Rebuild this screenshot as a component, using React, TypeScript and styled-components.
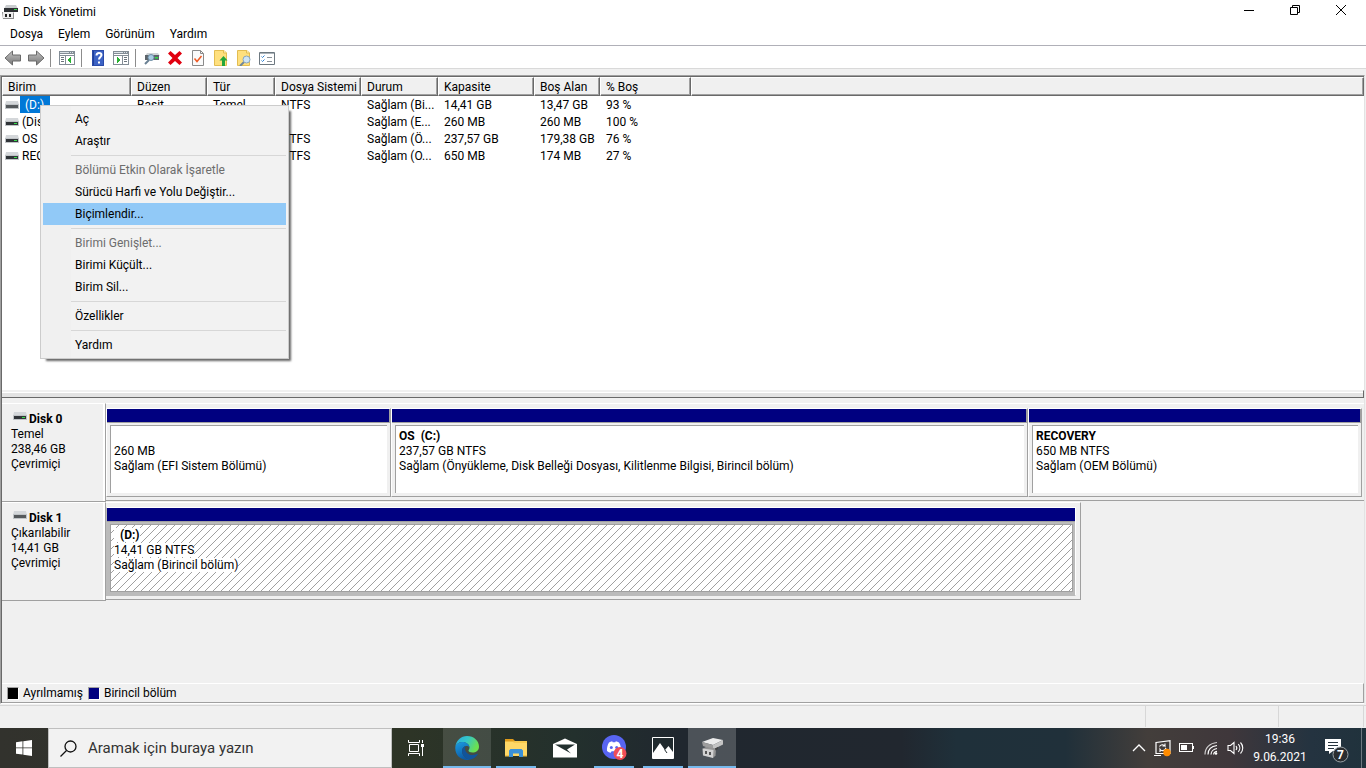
import React from "react";
import styled, { createGlobalStyle, css } from "styled-components";

const face = "#f0f0f0";
const shade = "#a0a0a0";
const dark = "#696969";
const navy = "#000080";

const GlobalStyle = createGlobalStyle`
  * { box-sizing: border-box; }
  body { margin: 0; background: #fff; }
  button, input, table { font: inherit; color: inherit; }
  button { border: 0; padding: 0; background: transparent; }
  svg { display: block; flex: none; }
`;

const Desktop = styled.div`
  display: flex;
  flex-direction: column;
  min-height: 100vh;
  overflow: hidden;
  color: #000;
  background: ${face};
  font: 12px/15px "Segoe UI", Roboto, "Open Sans", sans-serif;
`;

/* Title bar, menu bar, toolbar */

const TitleBar = styled.header`
  display: flex;
  align-items: center;
  height: 24px;
  padding: 0 2px;
  background: #fff;
`;

const Title = styled.h1`
  flex: 1;
  margin: 0 0 0 5px;
  font-size: 12px;
  font-weight: 400;
`;

const CaptionButton = styled.button`
  display: grid;
  place-items: center;
  width: 46px;
  height: 24px;
  padding-bottom: 4px;
`;

const MenuBar = styled.nav`
  display: flex;
  gap: 15px;
  height: 22px;
  padding: 0 10px;
  border-bottom: 1px solid #b0b0b8;
  background: #fff;
`;

const MenuButton = styled.button`
  height: 20px;
`;

const ToolBar = styled.div`
  display: flex;
  align-items: center;
  height: 23px;
  padding: 2px 0 0 1px;
  border-bottom: 1px solid #d9d9d9;
  margin-bottom: 6px;
  background: #fff;
`;

const ToolButton = styled.button`
  display: grid;
  place-items: center;
  width: 23px;
  height: 20px;
`;

const ToolDivider = styled.span`
  width: 1px;
  height: 18px;
  margin: 0 4px 0 3px;
  background: #8c8c8c;
`;

/* Volume list */

const Frame = styled.main`
  flex: 1;
  display: flex;
  flex-direction: column;
  margin-right: 1px;
  border: solid ${shade};
  border-width: 1px 0 0 1px;
  border-right: 1px solid #e3e3e3;
  border-bottom: 1px solid #fff;
`;

const FrameInner = styled.div`
  flex: 1;
  display: flex;
  flex-direction: column;
  border: solid ${dark};
  border-width: 1px 0 0 1px;
`;

const VolumePane = styled.section`
  position: relative;
  flex: 1 0 313px;
  background: #fff;
`;

const VolumeTable = styled.table`
  width: 100%;
  table-layout: fixed;
  border-collapse: separate;
  border-spacing: 0;
`;

const HeadCell = styled.th`
  height: 19px;
  padding: 2px 0 0 5px;
  border: 1px solid;
  border-color: #fff ${dark} ${dark} #fff;
  box-shadow: inset -1px -1px 0 ${shade};
  background: ${face};
  font-weight: 400;
  text-align: left;
  white-space: nowrap;
`;

const Cell = styled.td`
  height: 17px;
  padding: 2px 4px 0 6px;
  overflow: hidden;
  white-space: nowrap;
`;

const NameCell = styled(Cell)`
  padding: 0 0 0 3px;
`;

const VolumeName = styled.div`
  display: flex;
  align-items: center;
  height: 17px;
`;

const NameText = styled.span<{ $selected?: boolean }>`
  height: 17px;
  margin-left: 1px;
  padding: 2px 2px 0;
  white-space: pre;
  ${(p) =>
    p.$selected &&
    css`
      padding: 2px 6px 0 5px;
      color: #fff;
      background: #0078d7;
    `}
`;

const Splitter = styled.div`
  height: 8px;
  border-top: 1px solid ${face};
  border-bottom: 1px solid ${dark};
  border-right: 1px solid ${dark};
  background: linear-gradient(${face} 1px, #fff 1px 2px, #e3e3e3 2px);
`;

/* Context menu */

const ContextMenu = styled.div`
  position: absolute;
  top: 28px;
  left: 38px;
  width: 249px;
  padding: 2px;
  border: 1px solid #ccc;
  background: linear-gradient(90deg, ${face} 30px, #f2f2f2 30px);
  box-shadow: 4px 4px 2px -2px rgba(0, 0, 0, 0.6);
`;

const MenuItem = styled.button<{ $active?: boolean }>`
  display: block;
  width: 100%;
  height: 22px;
  padding-left: 32px;
  text-align: left;
  background: ${(p) => (p.$active ? "#91c9f7" : "transparent")};
  &:disabled { color: #6d6d6d; }
`;

const MenuLine = styled.hr`
  height: 1px;
  margin: 3px 0 3px 28px;
  border: 0;
  background: #d7d7d7;
`;

/* Disk graph */

const DiskPane = styled.section`
  flex: 1 0 285px;
  padding-top: 5px;
`;

const DiskRow = styled.div`
  display: flex;
  align-items: flex-start;
`;

const DiskLabel = styled.div`
  flex: none;
  width: 104px;
  height: 99px;
  padding: 8px 0 0 9px;
  border: solid;
  border-width: 1px 1px 1px 0;
  border-color: #fff ${shade} ${shade};
  box-shadow: inset -2px 0 0 #fff;
`;

const DiskName = styled.div`
  display: flex;
  padding-left: 2px;
  gap: 2px;
  font-weight: 700;
`;

const Strip = styled.div<{ $share: number; $closed?: boolean }>`
  flex: ${(p) => p.$share} 1 0;
  display: flex;
  min-width: 0;
  height: 98px;
  padding: 4px ${(p) => (p.$closed ? 4 : 2)}px 3px 0;
  border-top: 1px solid #fff;
  border-bottom: 1px solid ${shade};
  border-right: ${(p) => (p.$closed ? `1px solid ${shade}` : "0")};
`;

const Rest = styled.div<{ $share: number }>`
  flex: ${(p) => p.$share} 1 0;
`;

const Partition = styled.article<{ $share: number; $selected?: boolean }>`
  flex: ${(p) => p.$share} 1 0;
  display: flex;
  flex-direction: column;
  min-width: 0;
  border: 1px solid;
  border-color: ${(p) =>
    p.$selected ? "#fff #fff #bbb #bbb" : `#fff ${shade} ${shade} #fff`};
  background: ${(p) => (p.$selected ? "#bbb" : face)};
  &::before {
    content: "";
    height: 13px;
    border-right: ${(p) => (p.$selected ? 0 : 1)}px solid ${shade};
    border-bottom: 1px solid ${shade};
    background: ${navy};
  }
`;

const PartitionBody = styled.div<{ $selected?: boolean }>`
  flex: 1;
  margin: 2px 3px 3px;
  padding: 3px 3px 0;
  overflow: hidden;
  white-space: pre;
  border: solid ${shade};
  border-width: ${(p) => (p.$selected ? "1px" : "1px 0 0 1px")};
  background: #fff;
  ${(p) =>
    p.$selected &&
    css`
      margin-right: 2px;
      background: linear-gradient(to bottom right, #fff 44%, #a0a0a0 46%, #a0a0a0 54%, #fff 56%)
        0 0 / 8px 8px;
      span, b { background: #fff; }
    `}
`;

const Line = styled.div`
  height: 15px;
`;

const Legend = styled.footer`
  display: flex;
  align-items: center;
  height: 20px;
  padding-left: 5px;
  border: solid;
  border-width: 1px 1px 1px 0;
  border-color: #fff ${shade} ${shade};
`;

const Swatch = styled.i<{ $color: string }>`
  width: 12px;
  height: 13px;
  margin-right: 4px;
  border: 1px solid;
  border-color: ${shade} #fff #fff ${shade};
  background: ${(p) => p.$color};
`;

const LegendText = styled.span`
  margin-right: 5px;
`;

const StatusBar = styled.div`
  display: flex;
  justify-content: flex-end;
  height: 24px;
  padding: 1px 2px 1px 0;
  border-top: 1px solid ${face};
  box-shadow: inset 0 1px 0 #d7d7d7;
`;

const StatusCell = styled.span<{ $width: number }>`
  width: ${(p) => p.$width}px;
  border-left: 1px solid #d7d7d7;
`;

/* Taskbar */

const TaskBar = styled.footer`
  display: flex;
  height: 40px;
  color: #fff;
  background: linear-gradient(
    90deg,
    #32322d 0,
    #2d3426 30%,
    #23302d 42%,
    #20272f 50%,
    #21272f 66%,
    #1f303a 70%,
    #20303a 78%,
    #433e3b 84%,
    #3f373b 90%,
    #243340 96%,
    #20323c 100%
  );
`;

const StartButton = styled.button`
  display: grid;
  place-items: center;
  width: 48px;
`;

const SearchBox = styled.label`
  display: flex;
  align-items: center;
  width: 344px;
  padding-left: 11px;
  gap: 11px;
  border: 1px solid #bfbfbf;
  color: #1e1e1e;
  background: #f2f2f2;
`;

const SearchInput = styled.input`
  flex: 1;
  min-width: 0;
  padding: 0;
  border: 0;
  outline: 0;
  font-size: 15px;
  line-height: 20px;
  background: transparent;
  &::placeholder { color: #333; opacity: 1; }
`;

const TaskList = styled.div`
  display: flex;
  gap: 1px;
`;

const TaskButton = styled.button<{ $state?: "open" | "focused" }>`
  position: relative;
  display: grid;
  place-items: center;
  width: 48px;
  background: ${(p) => (p.$state === "focused" ? "rgba(255,255,255,.2)" : "transparent")};
  &::after {
    content: "";
    position: absolute;
    bottom: 0;
    left: ${(p) => (p.$state === "focused" ? 0 : 4)}px;
    right: ${(p) => (p.$state === "focused" ? 0 : 4)}px;
    height: ${(p) => (p.$state ? 2 : 0)}px;
    background: #76b9ed;
  }
`;

const EdgeButton = styled(TaskButton)`
  margin-left: 2px;
  background: rgba(255, 255, 255, 0.13);
`;

const Tray = styled.div`
  display: flex;
  margin-left: auto;
`;

const TrayButton = styled.button`
  display: grid;
  place-items: center;
  width: 24px;
`;

const Clock = styled.time`
  width: 66px;
  padding-top: 2px;
  line-height: 18px;
  text-align: center;
`;

const NoticeButton = styled.button`
  display: grid;
  place-items: center;
  width: 48px;
  padding-top: 4px;
`;

const PeekButton = styled.button`
  width: 5px;
  border-left: 1px solid #6d7880;
`;

/* Icons */

const DriveIcon = ({ led }: { led?: boolean }) => (
  <svg width="14" height="8" viewBox="0 0 14 8" aria-hidden="true">
    <path d="M1 0h12l1 4H0z" fill="#d4d7da" />
    <path d="M0 3h14v5H0z" fill="#c0c4c7" />
    <path d="M1 4h12v3H1z" fill={led ? "#303438" : "#55595c"} />
    {led && <path d="M9 5h3v1H9z" fill="#36e04a" />}
  </svg>
);

const AppIcon = () => (
  <svg width="16" height="16" viewBox="0 0 16 16" aria-hidden="true">
    <path d="M4 1h10l2 4H2z" fill="#c9ccce" />
    <path d="M2 4h14v4H2z" fill="#2d3033" />
    <path d="M12 5h3v1h-3z" fill="#35d648" />
    <path d="M0 8h11l1 1v6H1z" fill="#8c8c8c" />
    <path d="M1 8h10v6H1z" fill="#ededed" />
    <path d="M3 10h2v3H3zM7 10h2v3H7z" fill="#222" />
  </svg>
);

const ArrowIcon = ({ flip }: { flip?: boolean }) => (
  <svg width="18" height="16" viewBox="0 0 18 16" aria-hidden="true">
    <defs>
      <linearGradient id={flip ? "arrowB" : "arrowA"} x1="0" y1="0" x2="0" y2="1">
        <stop offset="0" stopColor="#c4c4c4" />
        <stop offset="1" stopColor="#777" />
      </linearGradient>
    </defs>
    <path
      d={flip ? "M17 8 9.500 1v4H1.500v6h8v4z" : "M1 8 8.500 1v4h8v6h-8v4z"}
      fill={`url(#${flip ? "arrowB" : "arrowA"})`}
      stroke="#6a6a6a"
    />
  </svg>
);

const ConsoleIcon = ({ right }: { right?: boolean }) => (
  <svg width="16" height="14" viewBox="0 0 16 14" shapeRendering="crispEdges" aria-hidden="true">
    <path d="M0 0h16v14H0z" fill="#838d96" />
    <path d="M1 3h14v1H1zM1 5h14v8H1z" fill="#fff" />
    <path d="M1 1h9v1H1zM11 1h1v1h-1zM13 1h1v1h-1z" fill="#dce2e7" />
    <path d={right ? "M9 5h1v8H9z" : "M6 5h1v8H6z"} fill="#838d96" />
    <path
      d={right ? "M11 6h3v1h-3zM11 8h3v1h-3zM11 10h3v1h-3z" : "M2 6h3v1H2zM2 8h3v1H2zM2 10h3v1H2z"}
      fill="#6b747c"
    />
    <path
      d={right ? "M4 6h1v1h1v1h1v2H6v1H5v1H4z" : "M12 6h-1v1h-1v1H9v2h1v1h1v1h1z"}
      fill="#29b233"
    />
  </svg>
);

const HelpIcon = () => (
  <svg width="14" height="16" viewBox="0 0 14 16" aria-hidden="true">
    <path d="M1 0h12v16H1z" fill="#3c62c4" />
    <path d="M1 0h2v16H1z" fill="#20409a" />
    <path d="M1.500.500h11v15h-11z" fill="none" stroke="#2a4aa8" />
    <path
      d="M5.500 5.500c0-3.500 5-3 5-.500 0 2-2.500 2-2.500 4.500"
      fill="none"
      stroke="#fff"
      strokeWidth="2"
    />
    <path d="M7 11.500h2v2H7z" fill="#fff" />
  </svg>
);

const DriveSearchIcon = () => (
  <svg width="16" height="14" viewBox="0 0 16 14" aria-hidden="true">
    <path d="M3 2h11l2 3H1z" fill="#d0d4d7" />
    <path d="M1 4h14v5H1z" fill="#5d656b" />
    <path d="M11 6h3v1.500h-3z" fill="#31dd43" />
    <circle cx="7" cy="6.500" r="3" fill="#a8cbe4" stroke="#6f8ea5" />
    <path d="M5 9 1 13" stroke="#6a8193" strokeWidth="2" />
  </svg>
);

const DeleteIcon = () => (
  <svg width="16" height="16" viewBox="0 0 16 16" aria-hidden="true">
    <path
      d="M1 3.500 3.500 1 8 5l4.500-4L15 3.500 10.500 8l4.500 4.500-2.500 2.500L8 11l-4.500 4L1 12.500 5.500 8z"
      fill="#e1000f"
    />
  </svg>
);

const PageCheckIcon = () => (
  <svg width="14" height="16" viewBox="0 0 14 16" aria-hidden="true">
    <path d="M1.500.500h8l3 3v12h-11z" fill="#fafafa" stroke="#8a8a8a" />
    <path d="M9.500.500v3h3" fill="none" stroke="#8a8a8a" />
    <path d="m3.500 8.500 2.500 3 4.500-5.500" fill="none" stroke="#ee5a24" strokeWidth="1.500" />
  </svg>
);

const FolderPageIcon = ({ search }: { search?: boolean }) => (
  <svg width="16" height="16" viewBox="0 0 16 16" aria-hidden="true">
    <path d="M1.500.500H11l2.500 2.500v12.500h-12z" fill="#ffe07e" stroke="#e3bd51" />
    <path d="M10.500.500V3h3" fill="#fff1be" stroke="#e3bd51" />
    {search ? (
      <>
        <path d="m8 12-4 4" stroke="#70869a" strokeWidth="2" />
        <circle cx="10.500" cy="9.500" r="3.500" fill="#cfe5f5" stroke="#8aa5bb" />
      </>
    ) : (
      <path d="M10.500 6 14.500 10.500h-2.500V16H9v-5.500H6.500z" fill="#23a63a" />
    )}
  </svg>
);

const ChecklistIcon = () => (
  <svg width="16" height="13" viewBox="0 0 16 13" aria-hidden="true">
    <path d="M.500.500h15v12H.500z" fill="#fff" stroke="#6d7880" />
    <path d="M1 1h14v1H1z" fill="#aab2b8" />
    <path d="m2.500 4.500 1 1 2-2M2.500 8.500l1 1 2-2" fill="none" stroke="#2c7fd0" />
    <path d="M8 5.500h5M8 9.500h5" stroke="#8a9299" />
  </svg>
);

const WindowsIcon = () => (
  <svg width="16" height="16" viewBox="0 0 16 16" aria-hidden="true">
    <path
      d="M0 2.200 6.500 1.300v6.200H0zM7.300 1.200 16 0v7.500H7.300zM0 8.300h6.500v6.300L0 13.700zM7.300 8.300H16V16l-8.700-1.300z"
      fill="#fff"
    />
  </svg>
);

const SearchIcon = () => (
  <svg width="17" height="17" viewBox="0 0 17 17" aria-hidden="true">
    <circle cx="10.500" cy="6.500" r="5.500" fill="none" stroke="#111" strokeWidth="1.300" />
    <path d="M6.500 10.500.500 16.500" stroke="#111" strokeWidth="1.300" />
  </svg>
);

const TaskViewIcon = () => (
  <svg width="17" height="16" viewBox="0 0 17 16" aria-hidden="true">
    <path
      d="M.500 0v2.500h11V0M.500 16v-2.500h11V16M1.500 4.500h9v7h-9zM14.500 0v3M14.500 7v9"
      fill="none"
      stroke="#fff"
    />
    <path d="M13 4h3v3h-3z" fill="#fff" />
  </svg>
);

const EdgeIcon = () => (
  <svg width="24" height="24" viewBox="0 0 24 24" aria-hidden="true">
    <defs>
      <linearGradient id="edgeTop" x1="0" y1="0" x2="1" y2=".4">
        <stop offset="0" stopColor="#2aa8e0" />
        <stop offset=".5" stopColor="#34c6c8" />
        <stop offset="1" stopColor="#6be050" />
      </linearGradient>
      <linearGradient id="edgeSide" x1="0" y1="0" x2=".4" y2="1">
        <stop offset="0" stopColor="#1b9de2" />
        <stop offset="1" stopColor="#0c59a4" />
      </linearGradient>
    </defs>
    <path
      d="M.400 10.500C1.300 4.500 6 0 12 0c7 0 12 5 12 10.500 0 4-3 6-6.500 6-2.500 0-4-1-4-2 0-.700 1-1.200 1-3C14.500 8.500 11.500 6 7.500 6 4 6 1.500 8 .400 10.500z"
      fill="url(#edgeTop)"
    />
    <path
      d="M.400 10.500C1.500 7.500 4.500 6 7.500 6c4 0 7 2.500 7 5.500-.500-1-1.500-1.500-3-1.500-2.500 0-4.500 2-4.500 5 0 4 3.500 8.500 8.500 8.500-1 .400-2.200.500-3.500.500C5 24-.600 18 .400 10.500z"
      fill="url(#edgeSide)"
    />
    <path
      d="M7 15c0-2.500 1.500-4.500 4-5-1 1-1.300 2.200-1 3.500.700 3.500 4 5.500 7.500 5.500 2 0 3.500-.500 4.700-1.200.500-.200.900.200.500.700-1.700 2.600-4 4.400-7.200 5C10.500 23.500 7 19 7 15z"
      fill="#11549b"
    />
  </svg>
);

const ExplorerIcon = () => (
  <svg width="22" height="18" viewBox="0 0 22 18" aria-hidden="true">
    <path d="M0 0h8l2 2v3H0z" fill="#e09b1a" />
    <path d="M0 2.500h22V17H0z" fill="#ffd867" />
    <path d="M10 2h12v2H8z" fill="#f8ca4e" />
    <path d="M4 18v-6.500L5.500 10h11l1.500 1.500V18h-4v-3.500H8V18z" fill="#3b91d8" />
    <path d="M0 16h4v1.500H0zM18 16h4v1.500h-4z" fill="#f2c24a" />
  </svg>
);

const MailIcon = () => (
  <svg width="24" height="20" viewBox="0 0 24 20" aria-hidden="true">
    <path d="M0 6 12 .500 24 6v13.500H0z" fill="#fff" />
    <path d="M2 6.500h20L14 11.500l4 4-9-5z" fill="#23302f" />
  </svg>
);

const DiscordIcon = () => (
  <svg width="26" height="26" viewBox="0 0 26 26" aria-hidden="true">
    <circle cx="13" cy="12" r="12" fill="#5865f2" />
    <path
      d="M8 7.500c1-.700 2.300-1 3.200-1.200l.5 1h2.600l.5-1c1 .200 2.200.500 3.200 1.200 1.700 2.700 2.300 5.500 2 8.500-1.200 1-2.500 1.500-3.700 1.800l-.9-1.500H10.600l-.9 1.500C8.500 17.500 7.200 17 6 16c-.300-3 .400-5.800 2-8.500z"
      fill="#fff"
    />
    <circle cx="10.300" cy="12.500" r="1.500" fill="#5865f2" />
    <circle cx="15.700" cy="12.500" r="1.500" fill="#5865f2" />
    <circle cx="19" cy="18.500" r="6.500" fill="#f04e57" />
    <text x="19" y="22.500" textAnchor="middle" fontSize="12" fontWeight="700" fill="#fff">
      4
    </text>
  </svg>
);

const PhotosIcon = () => (
  <svg width="22" height="22" viewBox="0 0 22 22" aria-hidden="true">
    <path d="M.500.500h21v21H.500z" fill="#202a2e" stroke="#fff" />
    <path d="M1 16 8 6l5 7 3.500-4 4.500 6v6H1z" fill="#fff" />
    <path d="m12.500 12.500 2.500 3.500" stroke="#202a2e" />
  </svg>
);

const DiskToolIcon = () => (
  <svg width="22" height="22" viewBox="0 0 22 22" aria-hidden="true">
    <path d="M1 5 12 1l10 2-10 5z" fill="#ececec" />
    <path d="M1 5l11 3v4.500L2 9z" fill="#9d9d9d" />
    <path d="m12 8 10-5v4.500L12 12.500z" fill="#c4c4c4" />
    <path d="m2 11.500 3-1.500 8 1 2 1.500-.5 6L12 21z" fill="#949494" />
    <path d="m1.500 11.500 11 1.500-.5 8-10-2.500z" fill="#d2d2d2" />
    <path d="M4 14h2v3H4zM8 15h2v3H8z" fill="#555" />
    <path d="M14 11.500l3-1.500v2l-2.500 1.500z" fill="#444" />
  </svg>
);

const ChevronIcon = () => (
  <svg width="14" height="8" viewBox="0 0 14 8" aria-hidden="true">
    <path d="M1 7 7 1l6 6" fill="none" stroke="#fff" strokeWidth="1.300" />
  </svg>
);

const SyncIcon = () => (
  <svg width="18" height="17" viewBox="0 0 18 17" aria-hidden="true">
    <path d="M2 2.500 16 .700v12.600L2 13.500z" fill="none" stroke="#fff" strokeWidth="1.200" />
    <path d="M0 15.500h7M5.500 6.500c1-2 4-2.500 5.500-.500V3.500M12 8c-1 3-4.500 3.500-6 1.200V12M8.500 6H11" fill="none" stroke="#fff" strokeWidth="1.100" />
    <circle cx="13" cy="12.500" r="3.700" fill="#ff8c00" />
  </svg>
);

const BatteryIcon = () => (
  <svg width="16" height="10" viewBox="0 0 16 10" shapeRendering="crispEdges" aria-hidden="true">
    <path d="M.500.500h13v8H.500z" fill="none" stroke="#fff" />
    <path d="M2 2h6v5H2zM14 3h1v3h-1z" fill="#fff" />
  </svg>
);

const WifiIcon = () => (
  <svg width="14" height="14" viewBox="0 0 14 14" aria-hidden="true">
    <g fill="none" stroke="#fff" strokeWidth="1.200">
      <path d="M1 13.500C1 6.500 6 2 13 1.500" opacity=".75" />
      <path d="M4 13.500C4 8.500 7.500 5.200 13 4.500" />
      <path d="M7 13.500c0-3 2.500-5.500 6-6" />
      <path d="M9.700 13.500c0-1.600 1.300-3 3.300-3.200" />
    </g>
    <circle cx="12" cy="12.500" r="1.300" fill="#fff" />
  </svg>
);

const VolumeIcon = () => (
  <svg width="17" height="14" viewBox="0 0 17 14" aria-hidden="true">
    <g fill="none" stroke="#fff" strokeWidth="1.100">
      <path d="M1 4.500h2.500L7 1.500v11l-3.500-3H1z" />
      <path d="M9 5c1 1.200 1 2.800 0 4M11.300 3.200c2 2.200 2 5.400 0 7.600M13.500 1.500c3 3.200 3 7.800 0 11" />
    </g>
  </svg>
);

const NoticeIcon = () => (
  <svg width="26" height="25" viewBox="0 0 26 25" aria-hidden="true">
    <path d="M1 1h16v12h-8l-4 3v-3H1z" fill="#fff" />
    <path d="M4 4.500h10M4 7.500h10M4 10.500h6" stroke="#26333d" />
    <circle cx="16.500" cy="16.500" r="7.500" fill="#2a2d30" stroke="#98a0a5" />
    <text x="16.500" y="21" textAnchor="middle" fontSize="12" fontWeight="700" fill="#fff">
      7
    </text>
  </svg>
);

const MinimizeIcon = () => (
  <svg width="10" height="10" viewBox="0 0 10 10" aria-hidden="true">
    <path d="M0 5.500h10" stroke="#000" />
  </svg>
);

const RestoreIcon = () => (
  <svg width="10" height="10" viewBox="0 0 10 10" aria-hidden="true">
    <path d="M.500 2.500h7v7h-7zM2.500 2.500v-2h7v7h-2" fill="none" stroke="#000" />
  </svg>
);

const CloseIcon = () => (
  <svg width="10" height="10" viewBox="0 0 10 10" aria-hidden="true">
    <path d="m0 0 10 10M10 0 0 10" stroke="#000" />
  </svg>
);

/* Data */

const tools: (null | { label: string; icon: React.ReactNode })[] = [
  { label: "Geri", icon: <ArrowIcon /> },
  { label: "İleri", icon: <ArrowIcon flip /> },
  null,
  { label: "Konsol Ağacını Göster", icon: <ConsoleIcon /> },
  null,
  { label: "Yardım", icon: <HelpIcon /> },
  { label: "Eylem Bölmesini Göster", icon: <ConsoleIcon right /> },
  null,
  { label: "Diskleri Yeniden Tara", icon: <DriveSearchIcon /> },
  { label: "Sil", icon: <DeleteIcon /> },
  { label: "Özellikler", icon: <PageCheckIcon /> },
  { label: "Aç", icon: <FolderPageIcon /> },
  { label: "Araştır", icon: <FolderPageIcon search /> },
  { label: "Ayarlar", icon: <ChecklistIcon /> },
];

const columns: [string, number?][] = [
  ["Birim", 129],
  ["Düzen", 76],
  ["Tür", 68],
  ["Dosya Sistemi", 86],
  ["Durum", 77],
  ["Kapasite", 96],
  ["Boş Alan", 66],
  ["% Boş", 91],
  [""],
];

const volumes = [
  { name: "(D:)", led: false, cells: ["Basit", "Temel", "NTFS", "Sağlam (Bi...", "14,41 GB", "13,47 GB", "93 %"] },
  { name: "(Disk 0)", led: true, cells: ["Basit", "Temel", "", "Sağlam (E...", "260 MB", "260 MB", "100 %"] },
  { name: "OS (C:)", led: true, cells: ["Basit", "Temel", "NTFS", "Sağlam (Ö...", "237,57 GB", "179,38 GB", "76 %"] },
  { name: "RECOVERY", led: true, cells: ["Basit", "Temel", "NTFS", "Sağlam (O...", "650 MB", "174 MB", "27 %"] },
];

const contextItems: (null | { text: string; disabled?: boolean; active?: boolean })[] = [
  { text: "Aç" },
  { text: "Araştır" },
  null,
  { text: "Bölümü Etkin Olarak İşaretle", disabled: true },
  { text: "Sürücü Harfi ve Yolu Değiştir..." },
  { text: "Biçimlendir...", active: true },
  null,
  { text: "Birimi Genişlet...", disabled: true },
  { text: "Birimi Küçült..." },
  { text: "Birim Sil..." },
  null,
  { text: "Özellikler" },
  null,
  { text: "Yardım" },
];

interface PartitionData {
  share: number;
  title: string;
  size: string;
  state: string;
  selected?: boolean;
}

interface DiskData {
  name: string;
  led: boolean;
  info: string[];
  share: number;
  rest: number;
  partitions: PartitionData[];
}

const disks: DiskData[] = [
  {
    name: "Disk 0",
    led: true,
    info: ["Temel", "238,46 GB", "Çevrimiçi"],
    share: 1,
    rest: 0,
    partitions: [
      { share: 283, title: "", size: "260 MB", state: "Sağlam (EFI Sistem Bölümü)" },
      {
        share: 635,
        title: "OS  (C:)",
        size: "237,57 GB NTFS",
        state: "Sağlam (Önyükleme, Disk Belleği Dosyası, Kilitlenme Bilgisi, Birincil bölüm)",
      },
      { share: 332, title: "RECOVERY", size: "650 MB NTFS", state: "Sağlam (OEM Bölümü)" },
    ],
  },
  {
    name: "Disk 1",
    led: false,
    info: ["Çıkarılabilir", "14,41 GB", "Çevrimiçi"],
    share: 970,
    rest: 283,
    partitions: [
      { share: 1, title: "  (D:)", size: "14,41 GB NTFS", state: "Sağlam (Birincil bölüm)", selected: true },
    ],
  },
];

export default function App() {
  return (
    <Desktop>
      <GlobalStyle />
      <TitleBar>
        <AppIcon />
        <Title>Disk Yönetimi</Title>
        <CaptionButton aria-label="Simge durumuna küçült"><MinimizeIcon /></CaptionButton>
        <CaptionButton aria-label="Önceki boyut"><RestoreIcon /></CaptionButton>
        <CaptionButton aria-label="Kapat"><CloseIcon /></CaptionButton>
      </TitleBar>
      <MenuBar>
        {["Dosya", "Eylem", "Görünüm", "Yardım"].map((m) => (
          <MenuButton key={m}>{m}</MenuButton>
        ))}
      </MenuBar>
      <ToolBar>
        {tools.map((t, i) =>
          t ? (
            <ToolButton key={i} aria-label={t.label}>{t.icon}</ToolButton>
          ) : (
            <ToolDivider key={i} />
          )
        )}
      </ToolBar>

      <Frame>
        <FrameInner>
          <VolumePane>
            <VolumeTable>
              <colgroup>
                {columns.map(([c, w]) => (
                  <col key={c} width={w} />
                ))}
              </colgroup>
              <thead>
                <tr>
                  {columns.map(([c]) => (
                    <HeadCell key={c}>{c}</HeadCell>
                  ))}
                </tr>
              </thead>
              <tbody>
                {volumes.map((v, i) => (
                  <tr key={v.name}>
                    <NameCell>
                      <VolumeName>
                        <DriveIcon led={v.led} />
                        <NameText $selected={i === 0}>{v.name}</NameText>
                      </VolumeName>
                    </NameCell>
                    {v.cells.map((c, j) => (
                      <Cell key={j}>{c}</Cell>
                    ))}
                  </tr>
                ))}
              </tbody>
            </VolumeTable>
            <ContextMenu role="menu">
              {contextItems.map((item, i) =>
                item ? (
                  <MenuItem key={i} role="menuitem" disabled={item.disabled} $active={item.active}>
                    {item.text}
                  </MenuItem>
                ) : (
                  <MenuLine key={i} />
                )
              )}
            </ContextMenu>
          </VolumePane>
          <Splitter />
          <DiskPane>
            {disks.map((d) => (
              <DiskRow key={d.name}>
                <DiskLabel>
                  <DiskName>
                    <DriveIcon led={d.led} />
                    {d.name}
                  </DiskName>
                  {d.info.map((t) => (
                    <Line key={t}>{t}</Line>
                  ))}
                </DiskLabel>
                <Strip $share={d.share} $closed={d.rest > 0}>
                  {d.partitions.map((p) => (
                    <Partition key={p.state} $share={p.share} $selected={p.selected}>
                      <PartitionBody $selected={p.selected}>
                        <Line><b>{p.title}</b></Line>
                        <Line><span>{p.size}</span></Line>
                        <Line><span>{p.state}</span></Line>
                      </PartitionBody>
                    </Partition>
                  ))}
                </Strip>
                {d.rest > 0 && <Rest $share={d.rest} />}
              </DiskRow>
            ))}
          </DiskPane>
          <Legend>
            <Swatch $color="#000" />
            <LegendText>Ayrılmamış</LegendText>
            <Swatch $color={navy} />
            <LegendText>Birincil bölüm</LegendText>
          </Legend>
        </FrameInner>
      </Frame>
      <StatusBar>
        <StatusCell $width={133} />
        <StatusCell $width={85} />
        <StatusCell $width={1} />
      </StatusBar>

      <TaskBar>
        <StartButton aria-label="Başlat"><WindowsIcon /></StartButton>
        <SearchBox>
          <SearchIcon />
          <SearchInput type="text" aria-label="Ara" placeholder="Aramak için buraya yazın" />
        </SearchBox>
        <TaskList>
          <TaskButton aria-label="Görev Görünümü"><TaskViewIcon /></TaskButton>
          <EdgeButton aria-label="Microsoft Edge" $state="focused"><EdgeIcon /></EdgeButton>
          <TaskButton aria-label="Dosya Gezgini" $state="open"><ExplorerIcon /></TaskButton>
          <TaskButton aria-label="Posta"><MailIcon /></TaskButton>
          <TaskButton aria-label="Discord" $state="open"><DiscordIcon /></TaskButton>
          <TaskButton aria-label="Fotoğraflar" $state="open"><PhotosIcon /></TaskButton>
          <TaskButton aria-label="Disk Yönetimi" $state="focused"><DiskToolIcon /></TaskButton>
        </TaskList>
        <Tray>
          <TrayButton aria-label="Gizli simgeler"><ChevronIcon /></TrayButton>
          <TrayButton aria-label="Güncelleştirme"><SyncIcon /></TrayButton>
          <TrayButton aria-label="Pil"><BatteryIcon /></TrayButton>
          <TrayButton aria-label="Ağ"><WifiIcon /></TrayButton>
          <TrayButton aria-label="Ses"><VolumeIcon /></TrayButton>
          <Clock>
            19:36
            <br />
            9.06.2021
          </Clock>
          <NoticeButton aria-label="Bildirimler"><NoticeIcon /></NoticeButton>
          <PeekButton aria-label="Masaüstünü göster" />
        </Tray>
      </TaskBar>
    </Desktop>
  );
}
